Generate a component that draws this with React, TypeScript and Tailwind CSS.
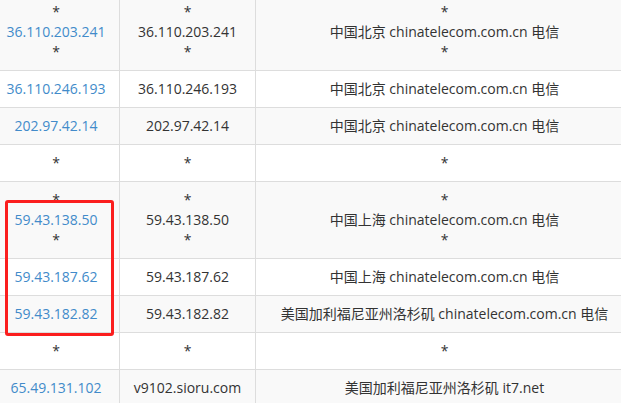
import React from "react";

type Row = { a: string[]; b: string[]; c: string[] };

const rows: Row[] = [
  { a: ["*", "36.110.203.241", "*"], b: ["*", "36.110.203.241", "*"], c: ["*", "中国北京 chinatelecom.com.cn 电信", "*"] },
  { a: ["36.110.246.193"], b: ["36.110.246.193"], c: ["中国北京 chinatelecom.com.cn 电信"] },
  { a: ["202.97.42.14"], b: ["202.97.42.14"], c: ["中国北京 chinatelecom.com.cn 电信"] },
  { a: ["*"], b: ["*"], c: ["*"] },
  { a: ["*", "59.43.138.50", "*"], b: ["*", "59.43.138.50", "*"], c: ["*", "中国上海 chinatelecom.com.cn 电信", "*"] },
  { a: ["59.43.187.62"], b: ["59.43.187.62"], c: ["中国上海 chinatelecom.com.cn 电信"] },
  { a: ["59.43.182.82"], b: ["59.43.182.82"], c: ["美国加利福尼亚州洛杉矶 chinatelecom.com.cn 电信"] },
  { a: ["*"], b: ["*"], c: ["*"] },
  { a: ["65.49.131.102"], b: ["v9102.sioru.com"], c: ["美国加利福尼亚州洛杉矶 it7.net"] },
];

function Lines({ items, link }: { items: string[]; link?: boolean }) {
  return (
    <>
      {items.map((t, i) => (
        <div key={i} className={link && t !== "*" ? "text-[#428bca]" : "text-[#333]"}>
          {t}
        </div>
      ))}
    </>
  );
}

export default function App() {
  return (
    <div
      className="relative w-[621px] h-[403px] overflow-hidden bg-white"
      style={{ fontFamily: '"Open Sans", "Noto Sans CJK SC", sans-serif' }}
    >
      <div className="-mt-[6px] -ml-[7px] w-[640px] text-[14px] leading-5 text-center">
        {rows.map((r, i) => (
          <div
            key={i}
            className={`grid grid-cols-[127px_136px_1fr] border-b border-[#dddddd] ${
              i % 2 === 0 ? "bg-[#f9f9f9]" : "bg-white"
            }`}
          >
            <div className="py-2 border-r border-[#dddddd] flex flex-col justify-center">
              <Lines items={r.a} link />
            </div>
            <div className="py-2 border-r border-[#dddddd] flex flex-col justify-center">
              <Lines items={r.b} />
            </div>
            <div className="py-2 flex flex-col justify-center whitespace-nowrap">
              <Lines items={r.c} />
            </div>
          </div>
        ))}
      </div>
      <div className="absolute left-[5px] top-[200px] w-[109px] h-[136px] border-[3px] border-[#fb1e1e] rounded-[3px]" />
    </div>
  );
}
